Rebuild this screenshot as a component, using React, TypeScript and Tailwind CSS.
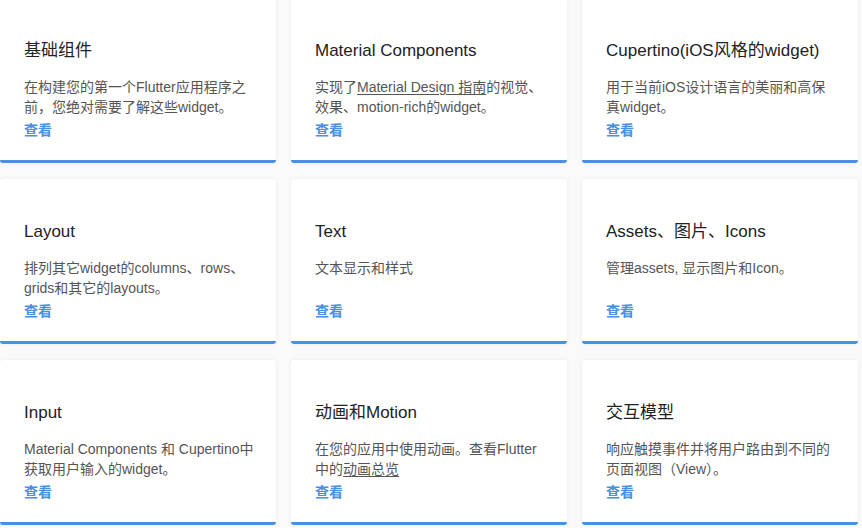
import type { ReactNode } from 'react'

type Card = {
  title: string
  desc: ReactNode
}

const cards: Card[] = [
  {
    title: '基础组件',
    desc: '在构建您的第一个Flutter应用程序之前，您绝对需要了解这些widget。',
  },
  {
    title: 'Material Components',
    desc: (
      <>
        实现了<span className="underline underline-offset-2">Material Design 指南</span>
        的视觉、效果、motion-rich的widget。
      </>
    ),
  },
  {
    title: 'Cupertino(iOS风格的widget)',
    desc: '用于当前iOS设计语言的美丽和高保真widget。',
  },
  {
    title: 'Layout',
    desc: '排列其它widget的columns、rows、grids和其它的layouts。',
  },
  {
    title: 'Text',
    desc: '文本显示和样式',
  },
  {
    title: 'Assets、图片、Icons',
    desc: '管理assets, 显示图片和Icon。',
  },
  {
    title: 'Input',
    desc: 'Material Components 和 Cupertino中获取用户输入的widget。',
  },
  {
    title: '动画和Motion',
    desc: (
      <>
        在您的应用中使用动画。查看Flutter中的
        <span className="underline underline-offset-2">动画总览</span>
      </>
    ),
  },
  {
    title: '交互模型',
    desc: '响应触摸事件并将用户路由到不同的页面视图（View）。',
  },
]

function WidgetCard({ title, desc }: Card) {
  return (
    <div className="flex flex-col bg-white rounded-[3px] border-b-[3px] border-[#4a90e2] shadow-[0_0_4px_rgba(0,0,0,0.07)] pt-[41px] pb-[20px] pl-[24px] pr-[20px]">
      <h3 className="text-[17px] leading-[24px] text-[#222] whitespace-nowrap">{title}</h3>
      <p className="mt-[14px] h-[40px] text-[14px] leading-[20px] text-[#555]">{desc}</p>
      <a href="#" className="mt-[3px] text-[14px] leading-[20px] font-bold text-[#4a90e2]">
        查看
      </a>
    </div>
  )
}

export default function App() {
  return (
    <div
      className="min-h-screen bg-[#fafafa] overflow-hidden"
      style={{ fontFamily: '"Liberation Sans", "Noto Sans CJK SC", sans-serif' }}
    >
      <div className="grid grid-cols-[276px_276px_276px] gap-x-[15px] gap-y-[16px] -mt-[2px]">
        {cards.map((c) => (
          <WidgetCard key={c.title} {...c} />
        ))}
      </div>
    </div>
  )
}
